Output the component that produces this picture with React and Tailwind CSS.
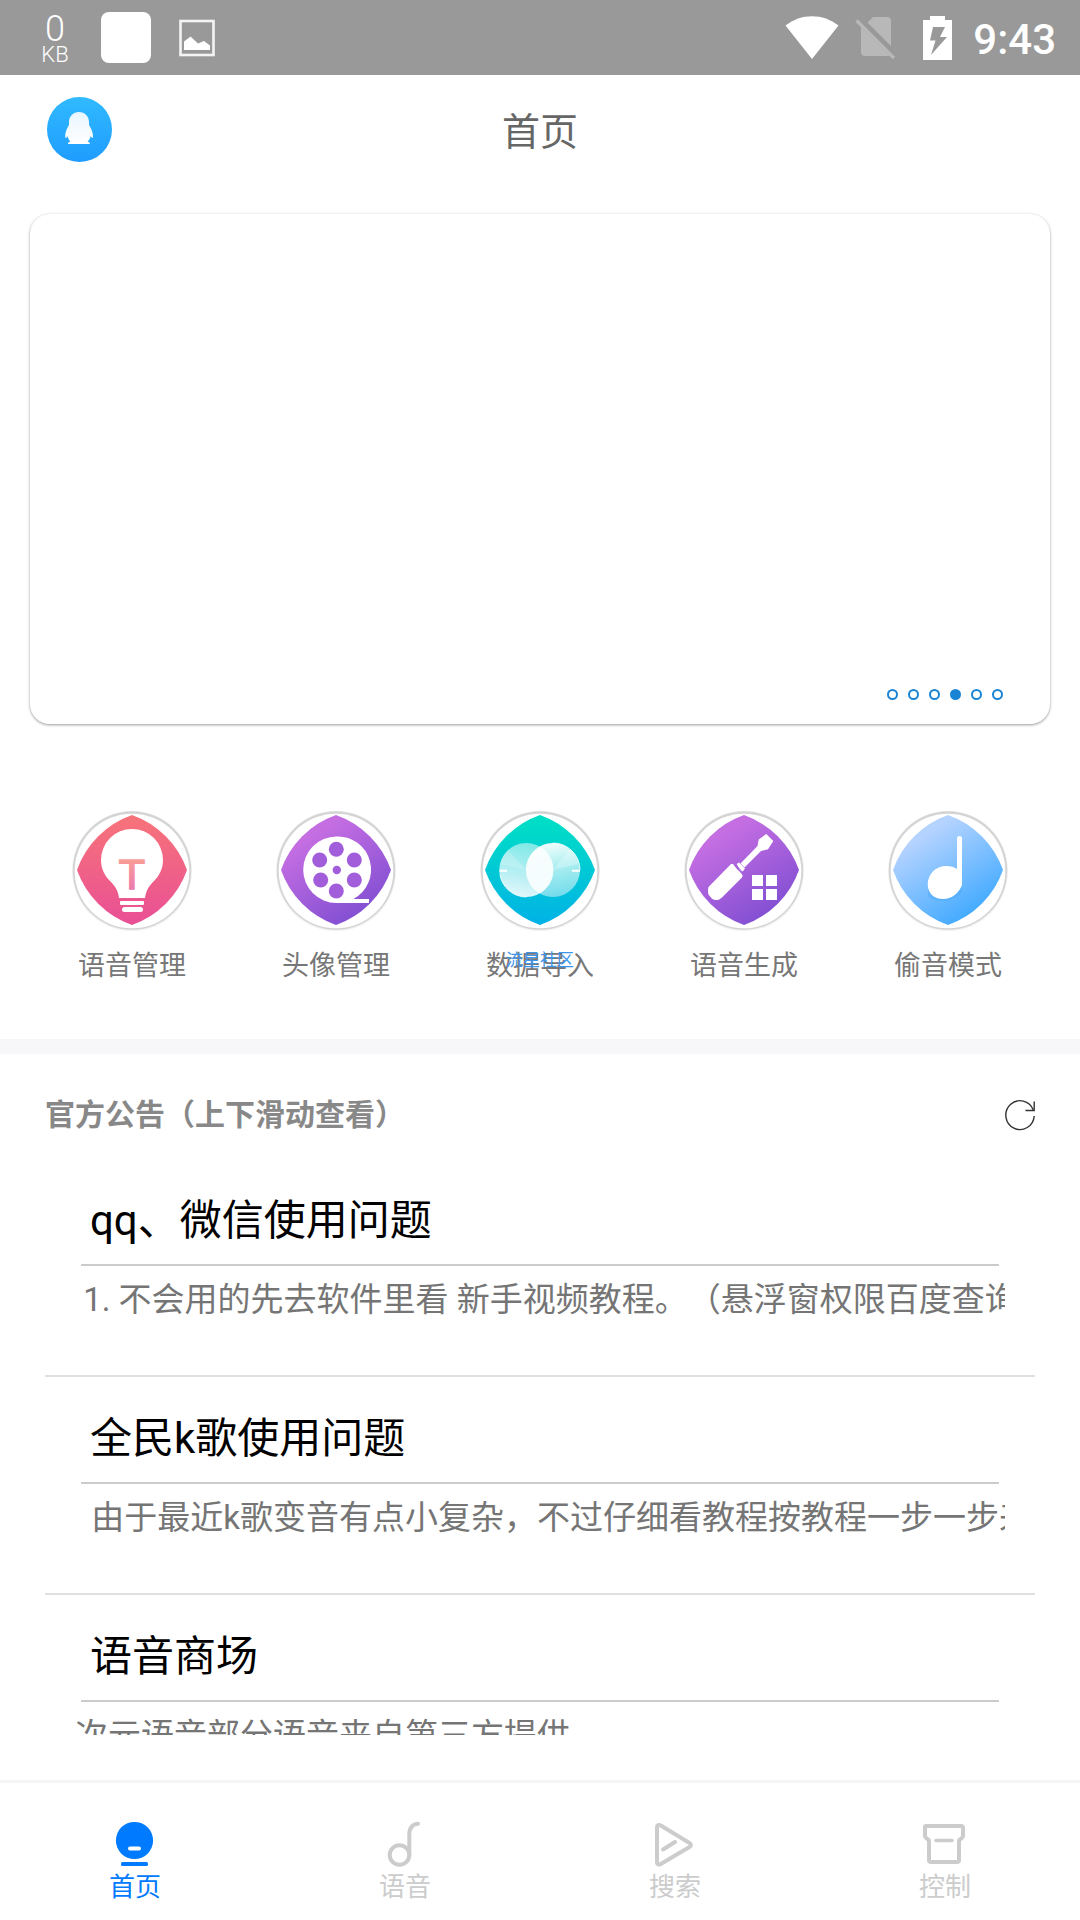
import React, { useState } from 'react';

// Shared badge: soft ring, white disc and the curved diamond
const Badge = ({ id, from, to, diagonal = false, children }) => (
  <svg viewBox="0 0 120 122" className="w-30 h-[122px]" aria-hidden="true">
    <defs>
      <linearGradient id={id} x1={diagonal ? '0.25' : '0.5'} y1={diagonal ? '0.2' : '0'} x2={diagonal ? '0.7' : '0.5'} y2={diagonal ? '0.9' : '1'}>
        <stop offset="0" stopColor={from} />
        <stop offset="1" stopColor={to} />
      </linearGradient>
    </defs>
    <circle cx="60" cy="61" r="60" fill="#f2f2f2" />
    <circle cx="60" cy="60.5" r="59.2" fill="#d4d4d4" />
    <circle cx="60" cy="61" r="57.3" fill="#fff" />
    <path d="M60 5A90 90 0 0 1 115 60A90 90 0 0 1 60 115A90 90 0 0 1 5 60A90 90 0 0 1 60 5Z" fill={`url(#${id})`} />
    {children}
  </svg>
);

const BulbIcon = () => (
  <Badge id="bulb" from="#f77479" to="#e94f95">
    <defs>
      <linearGradient id="bulbLetter" x1="0" y1="0" x2="0" y2="1">
        <stop offset="0.15" stopColor="#f9a096" />
        <stop offset="0.85" stopColor="#ec79ae" />
      </linearGradient>
    </defs>
    <path d="M60 19a31 31 0 0 1 31 31c0 9-4 16-9 21c-5 5-8 9-9 17H47c-1-8-4-12-9-17c-5-5-9-12-9-21a31 31 0 0 1 31-31Z" fill="#fff" />
    <rect x="48" y="91" width="24" height="4" rx="1" fill="#fff" />
    <rect x="50" y="97" width="21" height="5" rx="2.5" fill="#fff" />
    <text x="60" y="79" textAnchor="middle" fontFamily="Liberation Sans, sans-serif" fontSize="43" fill="url(#bulbLetter)" stroke="url(#bulbLetter)" strokeWidth="1.6">T</text>
  </Badge>
);

const FilmIcon = () => (
  <Badge id="film" from="#c56ee2" to="#8450d3" diagonal>
    <path d="M60.5 26.4a33.3 33.3 0 0 1 17 62.6H93v4H60.5a33.3 33.3 0 0 1 0-66.6Z" fill="#fff" />
    <g fill="#a25ddb">
      <circle cx="60.3" cy="39.3" r="7.5" />
      <circle cx="43.7" cy="50" r="7.5" />
      <circle cx="78.3" cy="50" r="7.5" />
      <circle cx="44.7" cy="70" r="7.5" />
      <circle cx="78.3" cy="70" r="7.5" />
      <circle cx="60.3" cy="81" r="7.5" />
      <circle cx="60.8" cy="60" r="4.2" />
    </g>
  </Badge>
);

const DiscsIcon = () => (
  <Badge id="discs" from="#00e0c4" to="#00b2e6">
    <defs>
      <linearGradient id="discLeft" x1="0.6" y1="0" x2="0.4" y2="1">
        <stop offset="0" stopColor="#fff" stopOpacity="0.5" />
        <stop offset="0.5" stopColor="#fff" stopOpacity="0.68" />
        <stop offset="1" stopColor="#fff" stopOpacity="0.88" />
      </linearGradient>
      <linearGradient id="discRight" x1="0.4" y1="0" x2="0.6" y2="1">
        <stop offset="0" stopColor="#fff" stopOpacity="0.95" />
        <stop offset="0.5" stopColor="#fff" stopOpacity="0.65" />
        <stop offset="1" stopColor="#fff" stopOpacity="0.45" />
      </linearGradient>
    </defs>
    <circle cx="46.3" cy="60" r="27" fill="url(#discLeft)" />
    <circle cx="73" cy="60" r="27" fill="url(#discRight)" />
    <path d="M46.3 60L28 40A27 27 0 0 0 20 54Z" fill="#fff" opacity="0.2" />
    <path d="M73 60L90 39A27 27 0 0 1 99 54Z" fill="#fff" opacity="0.25" />
    <path d="M59.7 36.5A27 27 0 0 1 59.7 83.5A27 27 0 0 1 59.7 36.5Z" fill="#fff" opacity="0.65" />
    <path d="M19.5 60.7h7.5M92 60.7h8" stroke="#fff" strokeWidth="2" />
    <path d="M73 33A27 27 0 0 1 100 60M46.3 87A27 27 0 0 1 20 65" stroke="#fff" strokeWidth="1" fill="none" opacity="0.8" />
  </Badge>
);

const ToolIcon = () => (
  <Badge id="tool" from="#c56ee2" to="#8450d3" diagonal>
    <g fill="#fff">
      <path d="M82.3 24L89.3 31L84 39.3L77 41L60.5 57.5L56.5 53.5L73.5 36L74.7 29.5Z" />
      <path d="M52.7 54L55 52.5L61 58.5L58.8 61.5L56.5 61Z" />
      <path d="M47 54L49 54L52 58L57 63L58.7 65.5L58 67.5L38 87.5C35 90.5 31 90.8 28 88.7L24.5 84.5C23.8 82 23.8 79.5 24.5 77Z" />
      <path d="M68 65h11v11H68zM82 65h11v11H82zM68 79h11v11H68zM82 79h11v11H82z" />
    </g>
    <path d="M52 55.5L58 61.5" stroke="#a860dd" strokeWidth="1" />
  </Badge>
);

const NoteIcon = () => (
  <Badge id="note" from="#b5d3ff" to="#45abff" diagonal>
    <path d="M40 77v9c5 7 25 7 34-4V75Z" fill="#3f9ef5" opacity="0.3" />
    <path d="M69 28.5a2.5 2.5 0 0 1 5 0V75C71 83 64 89 55 89C46 89 39.7 83 39.7 74.5C39.7 64 48 56 58 56C62.5 56 66.5 57 69 59Z" fill="#fff" />
  </Badge>
);

const WifiIcon = () => (
  <svg viewBox="0 0 54 44" className="w-[54px] h-11" aria-hidden="true">
    <path d="M0.5 9.5C16-3 38-3 53.5 9.5L27 43Z" fill="#fff" />
  </svg>
);

const NoSimIcon = () => (
  <svg viewBox="0 0 40 44" className="w-10 h-11" aria-hidden="true">
    <path d="M18 1H32a4 4 0 0 1 4 4V30L12.5 6.5ZM6 10.5L35.5 40H10a4 4 0 0 1-4-4Z" fill="#b8b8b8" />
    <path d="M1.5 4.5L39 42" stroke="#b8b8b8" strokeWidth="3.2" />
  </svg>
);

const BatteryIcon = () => (
  <svg viewBox="0 0 29 44" className="w-[29px] h-11" aria-hidden="true">
    <path d="M7 0H22V4H29V44H0V4H7Z" fill="#fff" />
    <path d="M10 11H22L17 21H24L8 39L12.5 24.5H7Z" fill="#999" />
  </svg>
);

const PictureIcon = () => (
  <svg viewBox="0 0 36 38" className="w-9 h-[38px]" aria-hidden="true">
    <rect x="1.5" y="2" width="33" height="34" fill="none" stroke="#f4f4f4" strokeWidth="2.6" />
    <path d="M5 31V22.500L11.5 17.5L19 24.5L25 22L31 26.5V31Z" fill="#fff" />
  </svg>
);

const PenguinIcon = () => (
  <svg viewBox="0 0 65 65" className="w-[65px] h-[65px]" aria-hidden="true">
    <defs>
      <linearGradient id="avatar" x1="0" y1="0" x2="0" y2="1">
        <stop offset="0" stopColor="#30baff" />
        <stop offset="1" stopColor="#1f9cff" />
      </linearGradient>
      <linearGradient id="penguin" x1="0" y1="0" x2="0" y2="1">
        <stop offset="0" stopColor="#e8f6ff" />
        <stop offset="1" stopColor="#fff" />
      </linearGradient>
    </defs>
    <circle cx="32.5" cy="32.5" r="32.5" fill="url(#avatar)" />
    <path d="M32 15C26 15 22 19.5 22 25V28C19.5 32 18 36 18.2 40C18.3 41.5 19.5 41 20.5 39C21 41.5 22 43.5 23.5 44.5C21.5 45 20.8 46 21 47H42.8C43 46 42.3 45 40.5 44.5C42 43.5 43.2 41.5 43.7 39C44.7 41 46 41.5 46 40C46.2 36 44.5 32 42 28V25C42 19.5 38 15 32 15Z" fill="url(#penguin)" />
  </svg>
);

const RefreshIcon = () => (
  <svg viewBox="0 0 30 32" className="w-[30px] h-8" fill="none" stroke="#333" strokeWidth="1.4" aria-hidden="true">
    <path d="M29.2 17A14.2 14.4 0 1 1 28.3 11" />
    <path d="M29.2 2.5V11.5H20.5" />
  </svg>
);

const HomeTabIcon = () => (
  <svg viewBox="0 0 48 48" className="w-12 h-12" aria-hidden="true">
    <circle cx="23.5" cy="20.5" r="18.6" fill="currentColor" />
    <rect x="17" y="26.5" width="13" height="4" rx="2" fill="#fff" />
    <rect x="10" y="42" width="27" height="4" rx="1.5" fill="currentColor" />
  </svg>
);

const VoiceTabIcon = () => (
  <svg viewBox="0 0 48 48" className="w-12 h-12" fill="none" stroke="currentColor" strokeWidth="4" strokeLinecap="round" aria-hidden="true">
    <circle cx="18.5" cy="35" r="9.8" />
    <path d="M28.3 35V14C28.3 8 32 3.7 37 3.7" />
  </svg>
);

const SearchTabIcon = () => (
  <svg viewBox="0 0 48 48" className="w-12 h-12" fill="none" stroke="currentColor" strokeWidth="4" strokeLinecap="round" strokeLinejoin="round" aria-hidden="true">
    <path d="M6 7.5C6 5 7.8 4.3 9.8 5.5L38.5 23C40.3 24.2 40.3 25.8 38.5 27L9.8 44C7.8 45.2 6 44.5 6 42.5Z" />
    <path d="M12 29.5L24 22" />
  </svg>
);

const ControlTabIcon = () => (
  <svg viewBox="0 0 48 48" className="w-12 h-12" fill="none" stroke="currentColor" strokeWidth="4" strokeLinecap="round" strokeLinejoin="round" aria-hidden="true">
    <path d="M5 6H40a2 2 0 0 1 2 2V16C42 18 40 18 38 20.5V40a2 2 0 0 1-2 2H10a2 2 0 0 1-2-2V20.5C6 18 4 18 4 16V7a1 1 0 0 1 1-1Z" />
    <path d="M15 20.5H31" strokeWidth="3.6" />
  </svg>
);

const shortcuts = [
  { label: '语音管理', icon: BulbIcon },
  { label: '头像管理', icon: FilmIcon },
  { label: '数据导入', icon: DiscsIcon, tag: '流星社区' },
  { label: '语音生成', icon: ToolIcon },
  { label: '偷音模式', icon: NoteIcon },
];

const notices = [
  { title: 'qq、微信使用问题', body: ' 1. 不会用的先去软件里看 新手视频教程。（悬浮窗权限百度查询' },
  { title: '全民k歌使用问题', body: '  由于最近k歌变音有点小复杂，不过仔细看教程按教程一步一步来' },
  { title: '语音商场', body: '次元语音部分语音来自第三方提供' },
];

const tabs = [
  { label: '首页', icon: HomeTabIcon },
  { label: '语音', icon: VoiceTabIcon },
  { label: '搜索', icon: SearchTabIcon },
  { label: '控制', icon: ControlTabIcon },
];

const StatusBar = () => (
  <div className="flex h-[75px] shrink-0 items-center justify-between bg-[#999] pl-10 pr-6 text-white">
    <div className="flex items-center">
      <div className="flex w-[30px] flex-col items-center pt-1 font-light">
        <span className="text-[36px] leading-[30px]">0</span>
        <span className="text-[22px] leading-[22px]">KB</span>
      </div>
      <div className="ml-[31px] h-[51px] w-[50px] rounded-lg bg-white" />
      <div className="ml-7">
        <PictureIcon />
      </div>
    </div>
    <div className="flex items-center">
      <WifiIcon />
      <div className="ml-4">
        <NoSimIcon />
      </div>
      <div className="ml-7">
        <BatteryIcon />
      </div>
      <span className="ml-[21px] pt-1 text-[42px] font-medium leading-[48px]">9:43</span>
    </div>
  </div>
);

const Header = () => (
  <header className="grid h-28 shrink-0 grid-cols-[1fr_auto_1fr] items-center px-[47px] pb-1">
    <button type="button" aria-label="QQ" className="w-[65px]">
      <PenguinIcon />
    </button>
    <h1 className="pt-1.5 text-[38px] leading-[48px] text-[#666]">首页</h1>
  </header>
);

const Carousel = ({ slides, active, onSelect }) => (
  <section className="mx-[30px] mt-[27px] flex aspect-[2/1] shrink-0 items-end justify-end rounded-[20px] bg-white px-[47px] py-6 shadow-[0_1px_3px_rgba(0,0,0,0.4)]">
    <div className="flex gap-[10px]">
      {Array.from({ length: slides }, (_, i) => (
        <button
          key={i}
          type="button"
          aria-label={`${i + 1}`}
          onClick={() => onSelect(i)}
          className={`h-[11px] w-[11px] rounded-full border-2 border-[#1a84d4] ${i === active ? 'bg-[#1a84d4]' : 'bg-white'}`}
        />
      ))}
    </div>
  </section>
);

const Shortcuts = () => (
  <section className="grid shrink-0 grid-cols-5 px-[30px] pb-[53px] pt-[86px]">
    {shortcuts.map(({ label, icon: Icon, tag }) => (
      <button key={label} type="button" className="flex flex-col items-center">
        <Icon />
        <span className="relative mt-[14px] text-[27px] leading-10 text-[#777]">
          {label}
          {tag && (
            <span className="absolute inset-x-0 top-0.5 text-center text-[17px] leading-6 text-[#3d96ec]">{tag}</span>
          )}
        </span>
      </button>
    ))}
  </section>
);

const Notices = () => (
  <section className="mb-[45px] flex min-h-0 flex-1 flex-col px-[45px]">
    <div className="flex shrink-0 items-center justify-between pb-6 pt-[41px]">
      <h2 className="text-[30px] font-bold leading-10 text-[#888]">官方公告（上下滑动查看）</h2>
      <button type="button" aria-label="刷新">
        <RefreshIcon />
      </button>
    </div>
    <ul className="min-h-0 flex-1 overflow-y-auto [scrollbar-width:none]">
      {notices.map(({ title, body }) => (
        <li key={title} className="border-b-2 border-[#e0e0e0] pb-[51px] pl-[30px] pr-[30px] pt-8">
          <h3 className="mx-[6px] border-b-2 border-[#ccc] pb-[13px] pl-[9px] text-[42px] leading-[60px] text-black">{title}</h3>
          <p className="mt-[10px] overflow-hidden whitespace-pre text-[33px] leading-[48px] text-[#757575]">{body}</p>
        </li>
      ))}
    </ul>
  </section>
);

const TabBar = ({ active, onSelect }) => (
  <nav className="grid h-[140px] shrink-0 grid-cols-4 border-t-3 border-[#f6f6f6] pt-[37px]">
    {tabs.map(({ label, icon: Icon }, i) => (
      <button
        key={label}
        type="button"
        onClick={() => onSelect(i)}
        className={`flex flex-col items-center ${i === active ? 'text-[#007aff]' : 'text-[#ccc]'}`}
      >
        <Icon />
        <span className="text-[26px] leading-[38px]">{label}</span>
      </button>
    ))}
  </nav>
);

function App() {
  const [slide, setSlide] = useState(3);
  const [tab, setTab] = useState(0);

  return (
    <div className="flex h-screen flex-col overflow-hidden bg-white font-['Roboto','Noto_Sans_CJK_SC',sans-serif] [text-spacing-trim:space-all]">
      <StatusBar />
      <Header />
      <Carousel slides={6} active={slide} onSelect={setSlide} />
      <Shortcuts />
      <div className="h-[15px] shrink-0 bg-[#f7f7fa]" />
      <Notices />
      <TabBar active={tab} onSelect={setTab} />
    </div>
  );
}

export default App;
